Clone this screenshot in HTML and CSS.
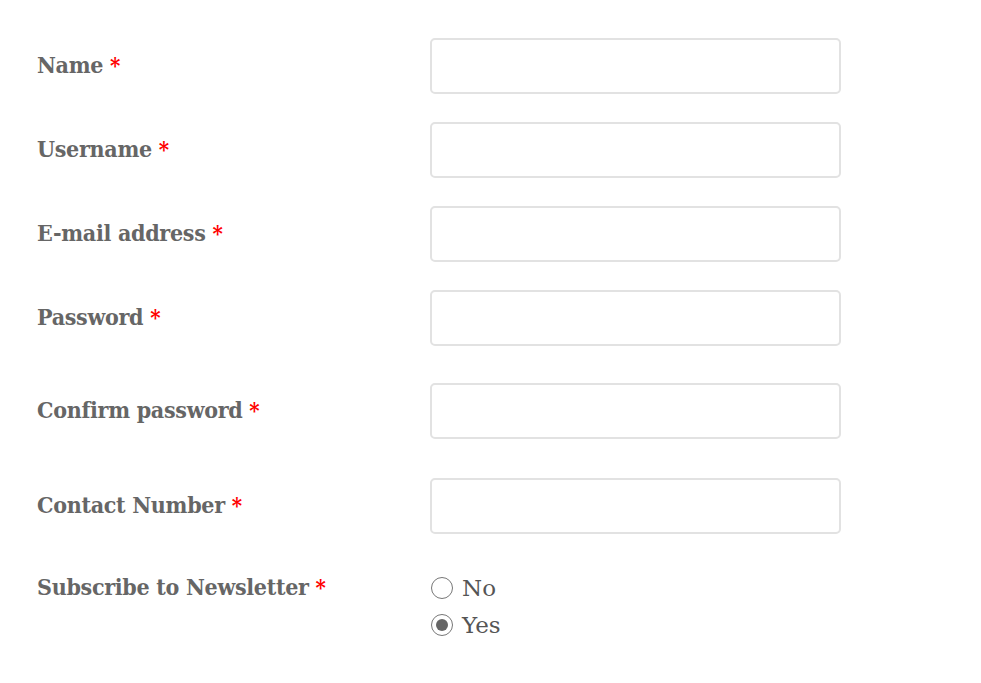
FILE: index.html
```html
<!DOCTYPE html>
<html>
<head>
<meta charset="utf-8">
<link rel="stylesheet" href="styles.css">
</head>
<body>
<form class="form">
  <div class="row r1">
    <label class="label">Name <span class="req">*</span></label>
    <input class="field" type="text">
  </div>
  <div class="row r2">
    <label class="label">Username <span class="req">*</span></label>
    <input class="field" type="text">
  </div>
  <div class="row r3">
    <label class="label">E-mail address <span class="req">*</span></label>
    <input class="field" type="text">
  </div>
  <div class="row r4">
    <label class="label">Password <span class="req">*</span></label>
    <input class="field" type="password">
  </div>
  <div class="row r5">
    <label class="label">Confirm password <span class="req">*</span></label>
    <input class="field" type="password">
  </div>
  <div class="row r6">
    <label class="label">Contact Number <span class="req">*</span></label>
    <input class="field" type="text">
  </div>
  <div class="row radio-row">
    <label class="label">Subscribe to Newsletter <span class="req">*</span></label>
    <div class="options">
      <label class="opt"><span class="radio"></span>No</label>
      <label class="opt"><span class="radio checked"></span>Yes</label>
    </div>
  </div>
</form>
</body>
</html>
```
FILE: styles.css
```css
html, body { margin: 0; padding: 0; background: #fff; }
body { font-family: "DejaVu Serif", "Liberation Serif", serif; color: #666; }
.form { padding: 38px 0 0 37px; display: flex; flex-direction: column; }
.row { display: grid; grid-template-columns: 393px 411px; align-items: center; height: 56px; }
.r2, .r3, .r4 { margin-top: 28px; }
.r5 { margin-top: 37px; }
.r6 { margin-top: 39px; }
.label { font-weight: bold; font-size: 23px; font-stretch: condensed; letter-spacing: -0.3px; color: #666; margin-top: -3px; }
.req { color: #f00; font-size: 22px; }
.field { box-sizing: border-box; width: 411px; height: 56px; border: 2px solid #e2e2e2; border-radius: 5px; margin: 0; background: #fff; }
.radio-row { align-items: start; height: auto; margin-top: 42px; }
.radio-row .label { line-height: 30px; margin-top: -4px; }
.options { display: flex; flex-direction: column; gap: 7px; margin-top: -3px; }
.opt { display: flex; align-items: center; font-size: 23px; color: #555; line-height: 30px; }
.radio { box-sizing: border-box; width: 22px; height: 22px; border: 1.5px solid #777; border-radius: 50%; margin-right: 9px; margin-left: 1px; display: inline-flex; align-items: center; justify-content: center; }
.radio.checked::after { content: ""; width: 12px; height: 12px; border-radius: 50%; background: #666; }
```
